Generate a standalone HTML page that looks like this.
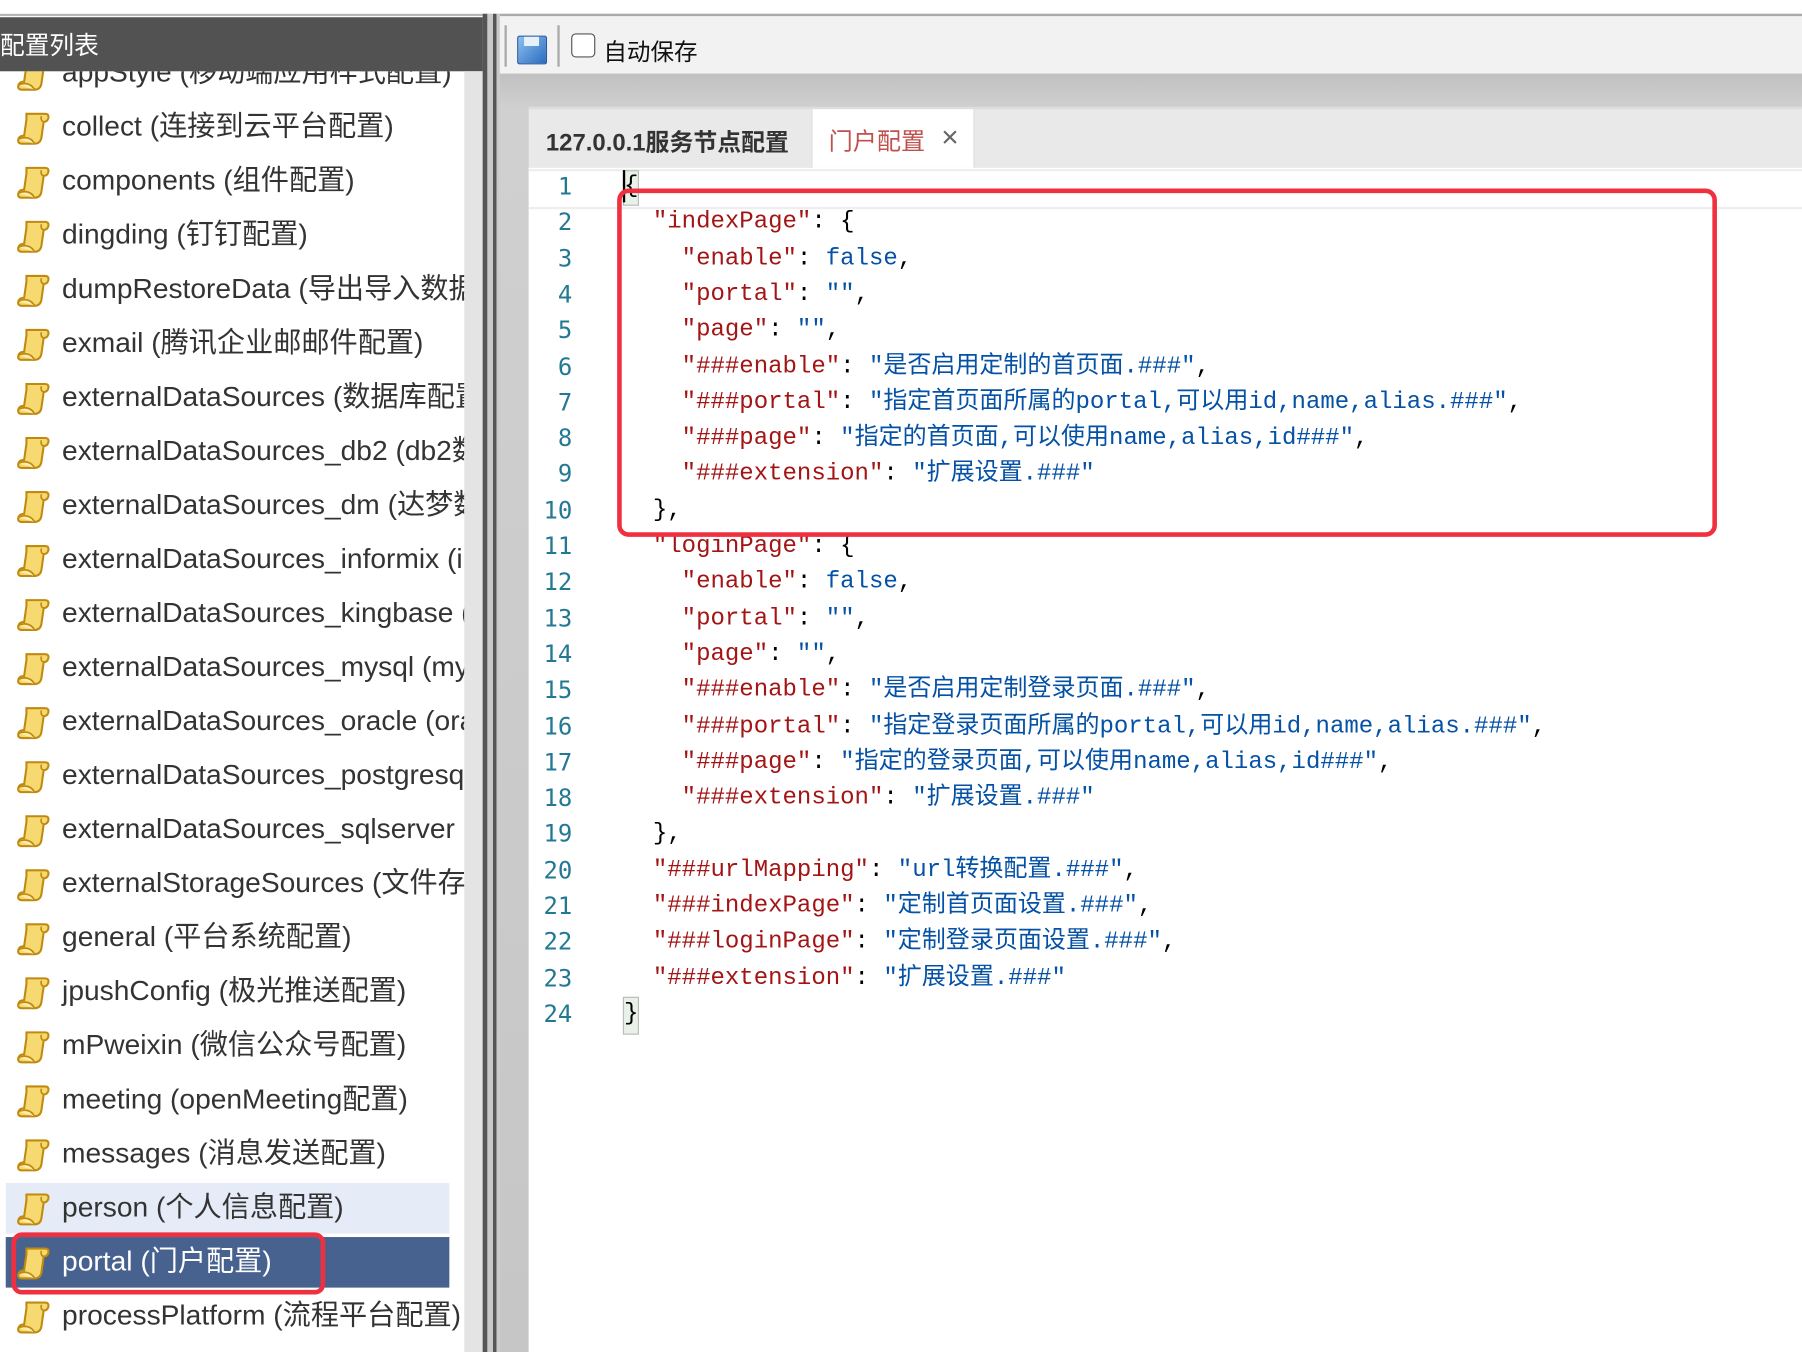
<!DOCTYPE html>
<html><head><meta charset="utf-8">
<style>
html,body{margin:0;padding:0;width:1802px;height:1352px;overflow:hidden;background:#fff}
#w{position:absolute;left:0;top:0;width:1568px;height:1176px;transform:scale(1.14923,1.14966);transform-origin:0 0;overflow:hidden;font-family:"Liberation Sans","Noto Sans CJK SC",sans-serif}
.abs{position:absolute}
#hdr{left:0;top:15px;width:428px;height:47px;background:#525252;color:#fff;font-size:21.5px;line-height:50px}
#list{left:0;top:62px;width:404px;height:1114px;overflow:hidden;background:#fff}
.it{position:absolute;left:0;height:44px;width:386px;font-size:24.5px;color:#333;line-height:44px;white-space:nowrap}
.it svg{position:absolute;left:14px;top:7px}
.it span{position:absolute;left:54px}
#sb{left:404px;top:62px;width:16px;height:1114px;background:#e4e4e4}
#div1{left:420px;top:12px;width:15px;height:1164px;background:#c9c9c9;border-left:4px solid #555;box-sizing:border-box}
#div1:after{content:"";position:absolute;left:5px;top:0;width:3px;height:100%;background:#555}
#tb{left:435px;top:12px;width:1133px;height:52px;background:#f2f2f2;border-top:2px solid #aaa}
#gray{left:435px;top:64px;width:1133px;height:1112px;background:linear-gradient(#c0c0c0,#d0d0d0 30px,#c6c6c6)}
#tabs{left:460px;top:93px;width:1108px;height:53px;background:#e9e9e9;border-top:2px solid #ddd}
#ed{left:460px;top:146px;width:1108px;height:1030px;background:#fff}
.ln{position:absolute;left:0;width:38px;text-align:right;color:#237893;font-family:"DejaVu Sans Mono","Liberation Mono",monospace;font-size:20.8px}
.cl{position:absolute;left:83px;white-space:pre;font-family:"Liberation Mono","Noto Sans CJK SC",monospace;font-size:20.9px;color:#000}
.k{color:#a31515}.s{color:#0451a5}
</style></head><body><div id="w">
<div class="abs" style="left:0;top:0;width:1568px;height:12px;background:#fff;border-bottom:2px solid #b5b5b5"></div>
<div id="list" class="abs"></div>
<div id="hdr" class="abs">配置列表</div>
<div id="sb" class="abs"></div>
<div id="div1" class="abs"></div>
<div id="tb" class="abs">
  <div class="abs" style="left:4px;top:8px;width:2px;height:36px;background:#aaa"></div>
  <div class="abs" style="left:15px;top:17px;width:24px;height:23px;background:linear-gradient(135deg,#8cc0f0,#2a6cc0);border:1px solid #2a5a9a;border-radius:2px"><div style="position:absolute;left:5px;top:0;width:13px;height:8px;background:#e8f0fa"></div></div>
  <div class="abs" style="left:50px;top:8px;width:2px;height:36px;background:#aaa"></div>
  <div class="abs" style="left:62px;top:15px;width:19px;height:19px;border:1.5px solid #555;border-radius:4px;background:#fff"></div>
  <div class="abs" style="left:90px;top:14px;font-size:20.5px;color:#111">自动保存</div>
</div>
<div id="gray" class="abs"></div>
<div id="tabs" class="abs">
  <div class="abs" style="left:15px;top:12px;font-size:20.8px;font-weight:bold;color:#333">127.0.0.1服务节点配置</div>
  <div class="abs" style="left:246px;top:0;width:140px;height:51px;background:#fff;border-left:1px solid #ddd;border-right:1px solid #ddd">
    <div class="abs" style="left:14px;top:12px;font-size:21px;color:#c0504d">门户配置</div>
    <div class="abs" style="left:112px;top:9px;font-size:26px;color:#666">×</div>
  </div>
</div>
<div id="ed" class="abs"></div>
<div class="abs" style="left:0;top:0;width:1568px;height:1176px;pointer-events:none" id="red"></div>
</div>
<script>
var items=["appStyle (移动端应用样式配置)","collect (连接到云平台配置)","components (组件配置)","dingding (钉钉配置)","dumpRestoreData (导出导入数据配置)","exmail (腾讯企业邮邮件配置)","externalDataSources (数据库配置)","externalDataSources_db2 (db2数据库配置)","externalDataSources_dm (达梦数据库配置)","externalDataSources_informix (informix数据库配置)","externalDataSources_kingbase (人大金仓数据库配置)","externalDataSources_mysql (mysql数据库配置)","externalDataSources_oracle (oracle数据库配置)","externalDataSources_postgresql (postgresql数据库配置)","externalDataSources_sqlserver (sqlserver数据库配置)","externalStorageSources (文件存储配置)","general (平台系统配置)","jpushConfig (极光推送配置)","mPweixin (微信公众号配置)","meeting (openMeeting配置)","messages (消息发送配置)","person (个人信息配置)","portal (门户配置)","processPlatform (流程平台配置)"];
var icon='<svg width="30" height="32" viewBox="0 0 30 32"><path d="M9 3 H25 Q29 3 28 7 Q27 10 24 10 L22 24 Q21 29 16 29 H5 Q1 29 2 25 Q3 22 7 22 L9 8 Q9 3 9 3Z" fill="#f6d970" stroke="#c08a10" stroke-width="1.8"/><path d="M2 25 Q6 23 10 24 Q14 25 16 29" fill="#fcecae" stroke="#c08a10" stroke-width="1.5"/><path d="M24 10 Q21 9 22 5" fill="none" stroke="#c08a10" stroke-width="1.4"/></svg>';
var h='';
items.forEach(function(t,i){var top=-20+i*47;var st='top:'+top+'px;';var sel=(i==21||i==22);
if(i==21){st+='background:#e6ecf7;left:5px;';}
if(i==22){st+='background:#48628f;left:5px;color:#fff;';}
h+='<div class="it" style="'+st+'">'+icon.replace('<svg','<svg style="left:'+(sel?9:14)+'px"')+'<span style="left:'+(sel?49:54)+'px">'+t+'</span></div>';});
document.getElementById('list').innerHTML=h;
var L=['{',
'  <k>"indexPage"</k>: {',
'    <k>"enable"</k>: <s>false</s>,',
'    <k>"portal"</k>: <s>""</s>,',
'    <k>"page"</k>: <s>""</s>,',
'    <k>"###enable"</k>: <s>"是否启用定制的首页面.###"</s>,',
'    <k>"###portal"</k>: <s>"指定首页面所属的portal,可以用id,name,alias.###"</s>,',
'    <k>"###page"</k>: <s>"指定的首页面,可以使用name,alias,id###"</s>,',
'    <k>"###extension"</k>: <s>"扩展设置.###"</s>',
'  },',
'  <k>"loginPage"</k>: {',
'    <k>"enable"</k>: <s>false</s>,',
'    <k>"portal"</k>: <s>""</s>,',
'    <k>"page"</k>: <s>""</s>,',
'    <k>"###enable"</k>: <s>"是否启用定制登录页面.###"</s>,',
'    <k>"###portal"</k>: <s>"指定登录页面所属的portal,可以用id,name,alias.###"</s>,',
'    <k>"###page"</k>: <s>"指定的登录页面,可以使用name,alias,id###"</s>,',
'    <k>"###extension"</k>: <s>"扩展设置.###"</s>',
'  },',
'  <k>"###urlMapping"</k>: <s>"url转换配置.###"</s>,',
'  <k>"###indexPage"</k>: <s>"定制首页面设置.###"</s>,',
'  <k>"###loginPage"</k>: <s>"定制登录页面设置.###"</s>,',
'  <k>"###extension"</k>: <s>"扩展设置.###"</s>',
'}'];
var e='<div class="abs" style="left:0;top:1px;width:1108px;height:35px;border-top:2px solid #eee;border-bottom:2px solid #eee;box-sizing:border-box"></div>';
e+='<div class="abs" style="left:82px;top:2px;width:14px;height:31px;background:#e8f2e8;border:1px solid #bbb;box-sizing:border-box"></div>';
e+='<div class="abs" style="left:82px;top:721px;width:14px;height:33px;background:#e8f2e8;border:1px solid #bbb;box-sizing:border-box"></div>';
e+='<div class="abs" style="left:82px;top:2px;width:2px;height:28px;background:#000"></div>';
L.forEach(function(t,i){var top=1+i*31.3;t=t.replace(/<k>/g,'<span class="k">').replace(/<s>/g,'<span class="s">').replace(/<\/[ks]>/g,'</span>');
e+='<div class="ln" style="top:'+top+'px;line-height:31px">'+(i+1)+'</div><div class="cl" style="top:'+top+'px;line-height:31px">'+t+'</div>';});
document.getElementById('ed').innerHTML=e;
document.getElementById('red').innerHTML='<div class="abs" style="left:537px;top:164px;width:957px;height:303px;border:4px solid #f0303f;border-radius:10px;box-sizing:border-box"></div><div class="abs" style="left:10px;top:1072px;width:273px;height:54px;border:4px solid #f0303f;border-radius:9px;box-sizing:border-box"></div>';
</script>
</body></html>
